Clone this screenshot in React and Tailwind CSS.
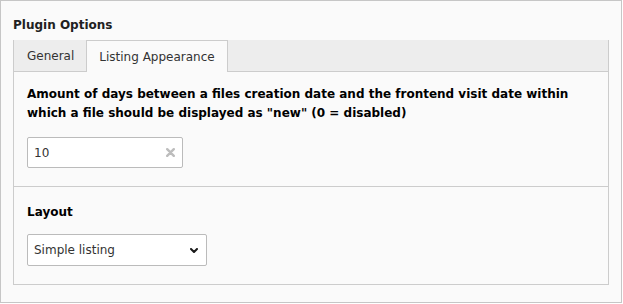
export default function App() {
  return (
    <div className="h-[304px] w-[623px] bg-white font-['DejaVu_Sans',Verdana,sans-serif] text-[12px] text-[#212121]">
      <div className="flex h-[303px] w-[622px] flex-col border border-[#c6c6c6] bg-[#fafafa] px-[12px] pt-[17px]">
        <h2 className="mb-[7px] text-[12px] font-bold leading-[15px] text-[#212121]">Plugin Options</h2>

        <ul className="flex h-[32px] border-b border-l border-r border-[#cccccc] bg-[#ededed]">
          <li className="flex items-center pl-[13px] pr-[12px] text-[#333]">General</li>
          <li className="-mb-px flex items-center border-l border-r border-t border-[#cccccc] bg-[#fafafa] px-[12px] text-[#333]">
            Listing Appearance
          </li>
        </ul>

        <div className="h-[213px] border-b border-l border-r border-[#cccccc] bg-[#fafafa]">
          <section className="border-b border-[#cccccc] px-[13px] pb-[18px] pt-[13px]">
            <label className="block font-bold leading-[19px] text-black">
              Amount of days between a files creation date and the frontend visit date within which a file should be displayed as "new" (0 = disabled)
            </label>
            <div className="mt-[14px] flex h-[31px] w-[156px] items-center justify-between rounded-[2px] border border-[#bbbbbb] bg-white pl-[6px] pr-[7px]">
              <span className="text-[#333]">10</span>
              <svg viewBox="0 0 9 9" className="h-[9px] w-[9px]">
                <path d="M1.2 1.2 7.8 7.8M7.8 1.2 1.2 7.8" stroke="#bdbdbd" strokeWidth="2.4" strokeLinecap="round" />
              </svg>
            </div>
          </section>

          <section className="px-[13px] pt-[16px]">
            <label className="block font-bold leading-[18px] text-black">Layout</label>
            <div className="mt-[13px] flex h-[32px] w-[180px] items-center justify-between rounded-[2px] border border-[#bbbbbb] bg-white pl-[6px] pr-[8px]">
              <span className="text-[#333]">Simple listing</span>
              <svg viewBox="0 0 8 5" className="h-[5px] w-[8px]">
                <path d="M1 1 4 4 7 1" fill="none" stroke="#1a1a1a" strokeWidth="2" strokeLinecap="round" strokeLinejoin="round" />
              </svg>
            </div>
          </section>
        </div>
      </div>
    </div>
  );
}
